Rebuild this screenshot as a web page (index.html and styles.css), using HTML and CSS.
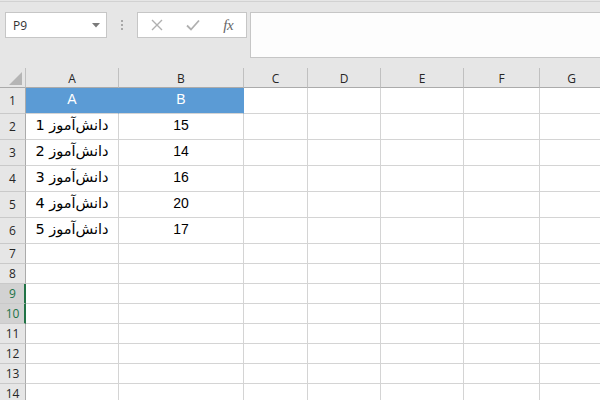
FILE: index.html
```html
<!DOCTYPE html>
<html lang="fa">
<head>
<meta charset="utf-8">
<title>Sheet</title>
<link rel="stylesheet" href="styles.css">
</head>
<body>
<div class="toolbar">
  <div class="namebox">
    <span class="name">P9</span>
    <svg class="caret" width="8" height="5" viewBox="0 0 8 5"><polygon points="0,0 8,0 4,4.5" fill="#7a7a7a"/></svg>
  </div>
  <div class="grip"><i></i><i></i><i></i></div>
  <div class="fxbox">
    <span class="slot"><svg width="12" height="12" viewBox="0 0 12 12"><path d="M1 1 L11 11 M11 1 L1 11" stroke="#b0b0b0" stroke-width="1.4" fill="none"/></svg></span>
    <span class="slot"><svg width="14" height="12" viewBox="0 0 14 12"><path d="M1 6.5 L5 10.5 L13 1.5" stroke="#b0b0b0" stroke-width="1.8" fill="none"/></svg></span>
    <span class="slot fx">fx</span>
  </div>
  <div class="formula"></div>
</div>
<div class="sheet">
  <div class="corner"><svg width="13" height="13" viewBox="0 0 13 13"><polygon points="13,0 13,13 0,13" fill="#b5b5b5"/></svg></div>
  <div class="ch">A</div><div class="ch">B</div><div class="ch">C</div><div class="ch">D</div><div class="ch">E</div><div class="ch">F</div><div class="ch">G</div>

  <div class="rh tall">1</div><div class="c tall hl">A</div><div class="c tall hl">B</div><div class="c"></div><div class="c"></div><div class="c"></div><div class="c"></div><div class="c"></div>
  <div class="rh tall">2</div><div class="c tall"><span dir="rtl" class="fa">دانش‌آموز 1</span></div><div class="c tall">15</div><div class="c"></div><div class="c"></div><div class="c"></div><div class="c"></div><div class="c"></div>
  <div class="rh tall">3</div><div class="c tall"><span dir="rtl" class="fa">دانش‌آموز 2</span></div><div class="c tall">14</div><div class="c"></div><div class="c"></div><div class="c"></div><div class="c"></div><div class="c"></div>
  <div class="rh tall">4</div><div class="c tall"><span dir="rtl" class="fa">دانش‌آموز 3</span></div><div class="c tall">16</div><div class="c"></div><div class="c"></div><div class="c"></div><div class="c"></div><div class="c"></div>
  <div class="rh tall">5</div><div class="c tall"><span dir="rtl" class="fa">دانش‌آموز 4</span></div><div class="c tall">20</div><div class="c"></div><div class="c"></div><div class="c"></div><div class="c"></div><div class="c"></div>
  <div class="rh tall">6</div><div class="c tall"><span dir="rtl" class="fa">دانش‌آموز 5</span></div><div class="c tall">17</div><div class="c"></div><div class="c"></div><div class="c"></div><div class="c"></div><div class="c"></div>

  <div class="rh">7</div><div class="c"></div><div class="c"></div><div class="c"></div><div class="c"></div><div class="c"></div><div class="c"></div><div class="c"></div>
  <div class="rh">8</div><div class="c"></div><div class="c"></div><div class="c"></div><div class="c"></div><div class="c"></div><div class="c"></div><div class="c"></div>
  <div class="rh sel">9</div><div class="c"></div><div class="c"></div><div class="c"></div><div class="c"></div><div class="c"></div><div class="c"></div><div class="c"></div>
  <div class="rh sel">10</div><div class="c"></div><div class="c"></div><div class="c"></div><div class="c"></div><div class="c"></div><div class="c"></div><div class="c"></div>
  <div class="rh">11</div><div class="c"></div><div class="c"></div><div class="c"></div><div class="c"></div><div class="c"></div><div class="c"></div><div class="c"></div>
  <div class="rh">12</div><div class="c"></div><div class="c"></div><div class="c"></div><div class="c"></div><div class="c"></div><div class="c"></div><div class="c"></div>
  <div class="rh">13</div><div class="c"></div><div class="c"></div><div class="c"></div><div class="c"></div><div class="c"></div><div class="c"></div><div class="c"></div>
  <div class="rh">14</div><div class="c"></div><div class="c"></div><div class="c"></div><div class="c"></div><div class="c"></div><div class="c"></div><div class="c"></div>
</div>
</body>
</html>
```
FILE: styles.css
```css
* { box-sizing: border-box; }
html, body {
  margin: 0;
  padding: 0;
  width: 600px;
  height: 400px;
  overflow: hidden;
  background: #e6e6e6;
  font-family: "Liberation Sans", "DejaVu Sans", sans-serif;
}
.toolbar {
  margin-top: 1px;
  height: 67px;
  border-top: 1px solid #d2d2d2;
  padding-top: 10px;
  display: flex;
  align-items: flex-start;
}
.namebox {
  margin-left: 5px;
  width: 102px;
  height: 26px;
  border: 1px solid #c6c6c6;
  background: #ffffff;
  display: flex;
  align-items: center;
  justify-content: space-between;
  padding: 0 6px 0 7px;
}
.name {
  font-family: "Open Sans", "Liberation Sans", sans-serif;
  font-size: 12px;
  color: #333;
}
.caret { margin-top: 1px; }
.grip {
  width: 30px;
  height: 26px;
  display: flex;
  flex-direction: column;
  align-items: center;
  justify-content: center;
  gap: 2px;
}
.grip i {
  display: block;
  width: 2px;
  height: 2px;
  background: #a8a8a8;
}
.fxbox {
  width: 110px;
  height: 26px;
  border: 1px solid #c6c6c6;
  background: #ffffff;
  display: flex;
  align-items: center;
  padding-left: 1px;
}
.slot {
  width: 36px;
  height: 24px;
  display: flex;
  align-items: center;
  justify-content: center;
}
.fx {
  font-family: "Liberation Serif", serif;
  font-style: italic;
  font-size: 15px;
  color: #666666;
  letter-spacing: -0.5px;
}
.formula {
  margin-left: 3px;
  flex: 1;
  height: 46px;
  border: 1px solid #c6c6c6;
  border-right: none;
  background: #fdfdfd;
}
.sheet {
  display: grid;
  grid-template-columns: 26px 93px 125px 64px 73px 83px 76px 64px;
  grid-template-rows: 20px repeat(6, 26px) repeat(8, 20px);
  background: #ffffff;
}
.corner {
  background: #e6e6e6;
  border-right: 1px solid #c0c0c0;
  border-bottom: 1px solid #ababab;
  display: flex;
  align-items: flex-end;
  justify-content: flex-end;
  padding: 0 3px 2px 0;
}
.ch {
  background: #e6e6e6;
  border-right: 1px solid #c0c0c0;
  border-bottom: 1px solid #ababab;
  display: flex;
  align-items: center;
  justify-content: center;
  font-family: "Open Sans", "Liberation Sans", sans-serif;
  font-size: 12px;
  color: #262626;
  padding-top: 1px;
}
.rh {
  background: #e6e6e6;
  border-right: 1px solid #ababab;
  border-bottom: 1px solid #c9c9c9;
  display: flex;
  align-items: center;
  justify-content: center;
  font-family: "Open Sans", "Liberation Sans", sans-serif;
  font-size: 12px;
  color: #262626;
}
.rh.sel {
  background: #d2d2d2;
  color: #217346;
  border-right: 2px solid #217346;
  padding-left: 1px;
}
.c {
  border-right: 1px solid #d4d4d4;
  border-bottom: 1px solid #d4d4d4;
  display: flex;
  align-items: center;
  justify-content: center;
  font-size: 14px;
  color: #000;
  white-space: nowrap;
  overflow: hidden;
}
.c.tall { padding-bottom: 3px; }
.c.hl {
  background: #5b9bd5;
  border-right-color: #5b9bd5;
  color: #ffffff;
}
.fa {
  font-family: "DejaVu Sans", sans-serif;
  font-size: 14.5px;
}
```
